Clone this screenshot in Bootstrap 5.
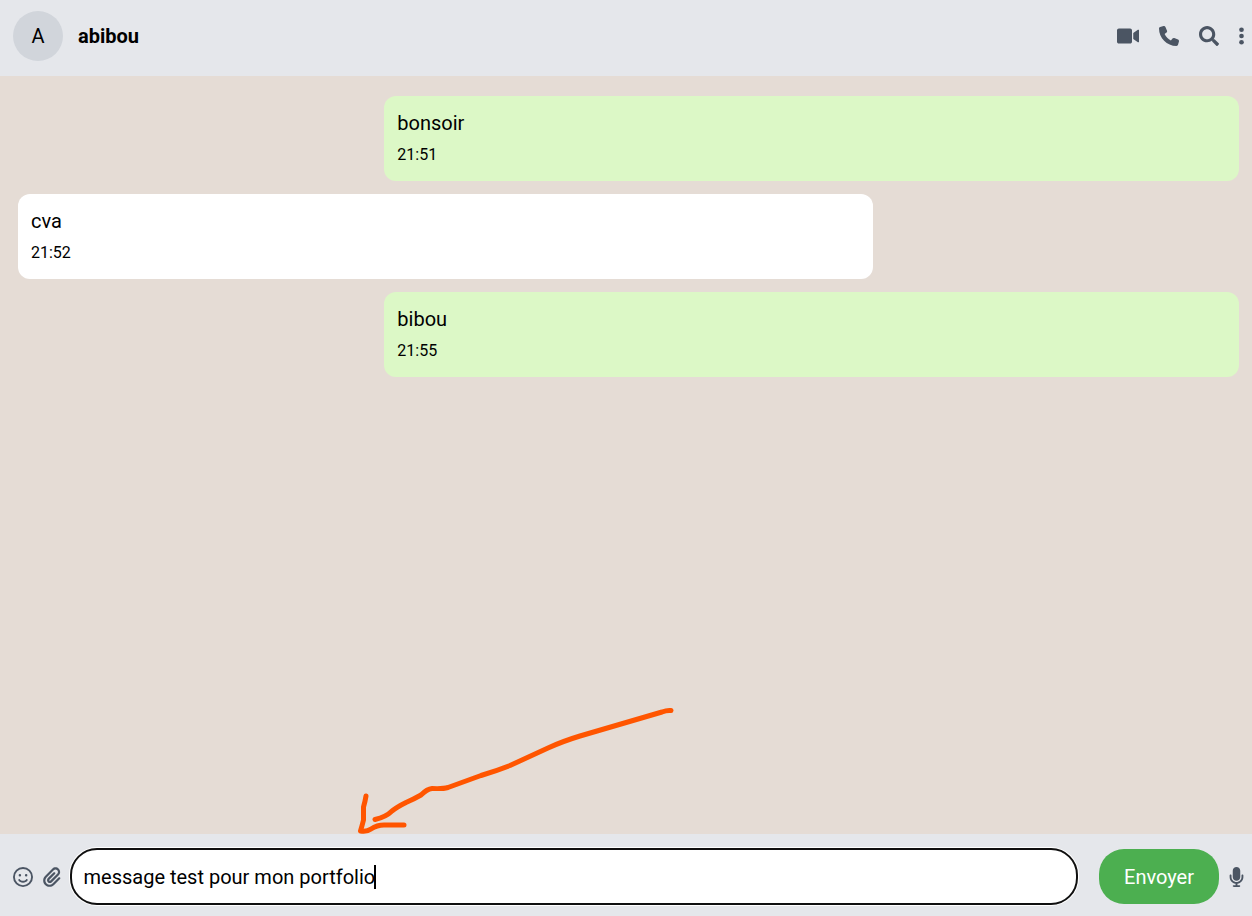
<!DOCTYPE html>
<html lang="fr">
<head>
<meta charset="utf-8">
<meta name="viewport" content="width=device-width, initial-scale=1">
<title>Discussion</title>
<link href="https://cdn.jsdelivr.net/npm/bootstrap@5.3.0/dist/css/bootstrap.min.css" rel="stylesheet">
<style>
body { font-family: Roboto, sans-serif; font-size: 20px; line-height: 30px; color: #000; background: #e5dcd5; }
.bar { background: #e5e7eb; color: #4b5563; }
.chat-head { height: 76px; padding: 0 8px 4px 13px; }
.peer { gap: 15px; }
.avatar { width: 50px; height: 50px; background: #d1d5db; color: #000; }
.contact { font-size: 20px; color: #000; }
.tools { gap: 20px; }
.icon-btn { color: inherit; line-height: 0; }
.icon-btn svg { height: 20px; fill: currentColor; display: block; }
.thread { padding: 20px 13px 20px 18px; gap: 13px; }
.bubble { width: 70%; height: 85px; padding: 13px; border-radius: 12px; }
.bubble p { line-height: 29px; }
.bubble time { font-size: 16px; line-height: 24px; margin-top: 5px; }
.sent { background: #dcf8c6; }
.sketch { left: 340px; bottom: 0; width: 350px; height: 144px; }
.composer { height: 82px; padding: 3px 8px 0 13px; }
.attach { gap: 10px; }
.message-box { height: 53px; border: 0; border-radius: 25px; padding: 0 12px; color: #000; outline: 2px solid #101010; box-shadow: 0 0 0 3px #fff; margin: 0 23px 0 11px; min-width: 0; }
.send { width: 120px; height: 55px; border-radius: 25px; background: #4caf50; color: #fff; font-size: 20px; margin-right: 10px; }
.caret { left: 374px; top: 31px; width: 2px; height: 24px; background: #000; }
</style>
</head>
<body>
<div class="d-flex flex-column vh-100">
  <header class="bar chat-head d-flex align-items-center justify-content-between">
    <div class="peer d-flex align-items-center">
      <div class="avatar rounded-circle d-flex align-items-center justify-content-center">A</div>
      <h1 class="contact fw-bold m-0">abibou</h1>
    </div>
    <div class="tools d-flex align-items-center">
      <button type="button" class="icon-btn btn p-0 border-0" aria-label="Appel vidéo"><svg viewBox="0 0 576 512"><path d="M336.200 64H47.800C21.400 64 0 85.400 0 111.800v288.400C0 426.600 21.400 448 47.800 448h288.400c26.400 0 47.800-21.400 47.800-47.800V111.800c0-26.400-21.400-47.800-47.800-47.800zm189.400 37.700L416 177.300v157.400l109.600 75.500c21.200 14.600 50.400-.3 50.400-25.800V127.500c0-25.400-29.100-40.400-50.400-25.800z"/></svg></button>
      <button type="button" class="icon-btn btn p-0 border-0" aria-label="Appeler"><svg viewBox="0 0 512 512"><path d="M164.900 24.600c-7.700-18.600-28-28.500-47.400-23.200l-88 24C12.100 30.200 0 46 0 64C0 311.400 200.600 512 448 512c18 0 33.800-12.100 38.600-29.500l24-88c5.300-19.400-4.600-39.700-23.200-47.400l-96-40c-16.300-6.800-35.200-2.100-46.300 11.600L304.700 368C234.300 334.700 177.300 277.700 144 207.300L193.300 167c13.700-11.200 18.400-30 11.600-46.300l-40-96z"/></svg></button>
      <button type="button" class="icon-btn btn p-0 border-0" aria-label="Rechercher"><svg viewBox="0 0 512 512"><path d="M505 442.700L405.300 343c-4.500-4.500-10.600-7-17-7H372c27.600-35.300 44-79.700 44-128C416 93.100 322.900 0 208 0S0 93.100 0 208s93.100 208 208 208c48.300 0 92.700-16.400 128-44v16.300c0 6.400 2.500 12.500 7 17l99.700 99.700c9.400 9.400 24.600 9.400 33.900 0l28.300-28.300c9.400-9.400 9.400-24.600.1-34zM208 336c-70.700 0-128-57.200-128-128 0-70.700 57.200-128 128-128 70.700 0 128 57.200 128 128 0 70.700-57.200 128-128 128z"/></svg></button>
      <button type="button" class="icon-btn btn p-0 border-0" aria-label="Menu"><svg viewBox="0 0 128 512"><circle cx="64" cy="96" r="60"/><circle cx="64" cy="256" r="60"/><circle cx="64" cy="416" r="60"/></svg></button>
    </div>
  </header>

  <main class="thread position-relative flex-grow-1 d-flex flex-column">
    <article class="bubble sent align-self-end"><p class="m-0">bonsoir</p><time class="d-block">21:51</time></article>
    <article class="bubble bg-white align-self-start"><p class="m-0">cva</p><time class="d-block">21:52</time></article>
    <article class="bubble sent align-self-end"><p class="m-0">bibou</p><time class="d-block">21:55</time></article>
    <svg class="sketch position-absolute" viewBox="0 0 350 144" fill="none" stroke="#ff5500" stroke-width="5" stroke-linecap="round" stroke-linejoin="round" aria-hidden="true">
      <path d="M331 20.500Q327 20 322 22L240 46Q222 51.500 208 58L170 75.500Q156 81 141 85.500L108 97.500Q103 99 92 98.500Q87 99 81 105Q74 109 66 112.500Q57 117 52 121Q46 127 35 129.500"/>
      <path d="M26 106Q25 112 23.500 117V130Q22 136 20.500 141Q27 142 31 139Q37 135 44 135L64 135"/>
    </svg>
  </main>

  <footer class="bar composer position-relative d-flex align-items-center">
    <div class="attach d-flex align-items-center">
      <button type="button" class="icon-btn btn p-0 border-0" aria-label="Émoticônes"><svg viewBox="0 0 512 512"><path d="M464 256A208 208 0 1 0 48 256a208 208 0 1 0 416 0zM0 256a256 256 0 1 1 512 0A256 256 0 1 1 0 256zm177.600 62.100C192.800 334.500 218.800 352 256 352s63.200-17.500 78.400-33.900c9-9.700 24.200-10.400 33.900-1.400s10.400 24.200 1.400 33.900c-22 23.800-60 49.400-113.600 49.400s-91.700-25.500-113.600-49.400c-9-9.700-8.400-24.900 1.400-33.900s24.900-8.400 33.900 1.400zM144.400 208a32 32 0 1 1 64 0 32 32 0 1 1-64 0zm192-32a32 32 0 1 1 0 64 32 32 0 1 1 0-64z"/></svg></button>
      <button type="button" class="icon-btn btn p-0 border-0" aria-label="Joindre un fichier"><svg viewBox="0 0 448 512"><path d="M364.200 83.800c-24.400-24.400-64-24.400-88.400 0l-184 184c-42.100 42.100-42.100 110.300 0 152.400s110.300 42.100 152.400 0l152-152c10.900-10.900 28.700-10.900 39.600 0s10.900 28.700 0 39.600l-152 152c-64 64-167.600 64-231.600 0s-64-167.600 0-231.600l184-184c46.300-46.300 121.300-46.300 167.600 0s46.300 121.300 0 167.600l-176 176c-28.600 28.600-75 28.600-103.600 0s-28.600-75 0-103.600l144-144c10.900-10.900 28.700-10.900 39.600 0s10.900 28.700 0 39.600l-144 144c-6.700 6.700-6.700 17.700 0 24.400s17.700 6.700 24.400 0l176-176c24.400-24.400 24.400-64 0-88.400z"/></svg></button>
    </div>
    <input type="text" class="message-box flex-grow-1" aria-label="Message" value="message test pour mon portfolio">
    <span class="caret position-absolute"></span>
    <button type="button" class="send btn p-0 border-0 flex-shrink-0">Envoyer</button>
    <button type="button" class="icon-btn btn p-0 border-0" aria-label="Message vocal"><svg viewBox="0 0 384 512"><path d="M192 0C139 0 96 43 96 96V256c0 53 43 96 96 96s96-43 96-96V96c0-53-43-96-96-96zM64 216c0-13.300-10.700-24-24-24s-24 10.700-24 24v40c0 89.100 66.200 162.700 152 174.400V464H120c-13.300 0-24 10.700-24 24s10.700 24 24 24h144c13.300 0 24-10.700 24-24s-10.700-24-24-24H216V430.400c85.800-11.700 152-85.300 152-174.400V216c0-13.300-10.700-24-24-24s-24 10.700-24 24v40c0 70.700-57.300 128-128 128s-128-57.300-128-128V216z"/></svg></button>
  </footer>
</div>
<script src="https://cdn.jsdelivr.net/npm/bootstrap@5.3.0/dist/js/bootstrap.bundle.min.js"></script>
</body>
</html>
